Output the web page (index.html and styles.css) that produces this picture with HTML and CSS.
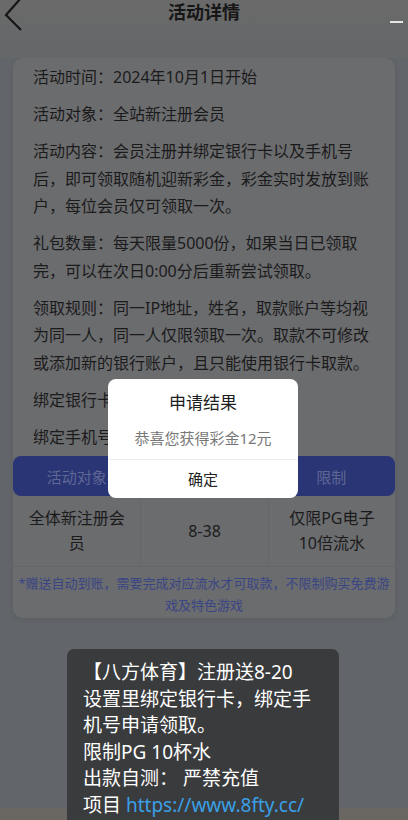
FILE: index.html
```html
<!DOCTYPE html>
<html lang="zh">
<head>
<meta charset="utf-8">
<title>活动详情</title>
<link rel="stylesheet" href="styles.css">
</head>
<body>
<div class="page">
  <header class="topbar">
    <svg class="back" width="22" height="32" viewBox="0 0 22 32"><path d="M18 -1 L3 16 L18 31" fill="none" stroke="#161616" stroke-width="2.2" stroke-linejoin="miter"/></svg>
    <h1 class="title">活动详情</h1>
    <span class="dash"></span>
  </header>

  <section class="card">
    <div class="rules">
      <p>活动时间：2024年10月1日开始</p>
      <p>活动对象：全站新注册会员</p>
      <p>活动内容：会员注册并绑定银行卡以及手机号后，即可领取随机迎新彩金，彩金实时发放到账户，每位会员仅可领取一次。</p>
      <p>礼包数量：每天限量5000份，如果当日已领取完，可以在次日0:00分后重新尝试领取。</p>
      <p>领取规则：同一IP地址，姓名，取款账户等均视为同一人，同一人仅限领取一次。取款不可修改或添加新的银行账户，且只能使用银行卡取款。</p>
      <p>绑定银行卡</p>
      <p>绑定手机号</p>
    </div>
    <div class="table">
      <div class="thead">
        <div class="th">活动对象</div>
        <div class="th"></div>
        <div class="th">限制</div>
      </div>
      <div class="trow">
        <div class="td">全体新注册会员</div>
        <div class="td">8-38</div>
        <div class="td">仅限PG电子<br>10倍流水</div>
      </div>
    </div>
    <p class="note">*赠送自动到账，需要完成对应流水才可取款，不限制购买免费游戏及特色游戏</p>
  </section>
  <div class="bottom-strip"></div>
</div>

<div class="dialog">
  <div class="dialog-title">申请结果</div>
  <div class="dialog-msg">恭喜您获得彩金12元</div>
  <div class="dialog-btn">确定</div>
</div>

<div class="toast">
  <div>【八方体育】注册送8-20</div>
  <div>设置里绑定银行卡，绑定手机号申请领取。</div>
  <div>限制PG 10杯水</div>
  <div>出款自测： 严禁充值</div>
  <div>项目 <a class="link" href="#">https://www.8fty.cc/</a></div>
</div>
</body>
</html>
```

FILE: styles.css
```css
* { box-sizing: border-box; margin: 0; padding: 0; }
html, body { width: 408px; height: 820px; overflow: hidden; }
body {
  background: #626569;
  font-family: "Noto Sans", "Noto Sans CJK SC", sans-serif;
  color: #1b1b1c;
  position: relative;
}
.page { height: 820px; display: flex; flex-direction: column; }
.topbar {
  height: 58px;
  background: linear-gradient(#6a6a6a, #656769);
  position: relative;
  display: flex;
  justify-content: center;
  flex-shrink: 0;
}
.back { position: absolute; left: 3px; top: -1px; }
.title {
  font-size: 18px;
  font-weight: 700;
  line-height: 24px;
  color: #161616;
}
.dash {
  position: absolute;
  right: 5px;
  top: 21px;
  width: 13px;
  height: 2px;
  background: #e6e6e6;
}
.card {
  margin: 0 13px;
  background: #6b6c6e;
  border-radius: 10px;
  box-shadow: 0 2px 6px rgba(0,0,0,.08);
  flex-shrink: 0;
}
.rules { padding: 6px 20px 5px; font-size: 16px; line-height: 27.5px; }
.rules p { margin-bottom: 9.5px; }
.rules p:last-child { margin-bottom: 0; }
.table { font-size: 16px; }
.thead {
  display: grid;
  grid-template-columns: 1fr 1fr 1fr;
  height: 40px;
  background: #2a3575;
  border-radius: 8px;
  color: #5f6794;
}
.th { display: flex; align-items: center; justify-content: center; font-size: 15px; }
.trow {
  display: grid;
  grid-template-columns: 1fr 1fr 1fr;
  border-bottom: 1px solid #646668;
}
.td {
  display: flex;
  align-items: center;
  justify-content: center;
  text-align: center;
  padding: 8px 12px;
  min-height: 70px;
  line-height: 25px;
  color: #1b1b1c;
}
.td + .td { border-left: 1px solid #646668; }
.note {
  font-size: 13px;
  line-height: 22px;
  color: #3a4584;
  text-align: center;
  padding: 5px 4px 2px;
}
.bottom-strip { margin-top: auto; height: 12px; background: #6a6662; }
.dialog {
  position: absolute;
  left: 108px;
  top: 379px;
  width: 190px;
  background: #fff;
  border-radius: 8px;
  text-align: center;
  overflow: hidden;
}
.dialog-title { font-size: 17px; line-height: 24px; padding-top: 12px; color: #1d1d1d; }
.dialog-msg { font-size: 15px; line-height: 20px; padding: 13px 0 11px; color: #777; }
.dialog-btn { font-size: 15px; line-height: 38px; border-top: 1px solid #eee; color: #222; }
.toast {
  position: absolute;
  left: 67px;
  top: 649px;
  width: 272px;
  height: 180px;
  background: #3a3b3d;
  border-radius: 7px;
  color: #fff;
  font-size: 19px;
  line-height: 26.5px;
  padding: 10px 14px 0 16px;
}
.link { color: #3aa0e6; text-decoration: none; }
```
